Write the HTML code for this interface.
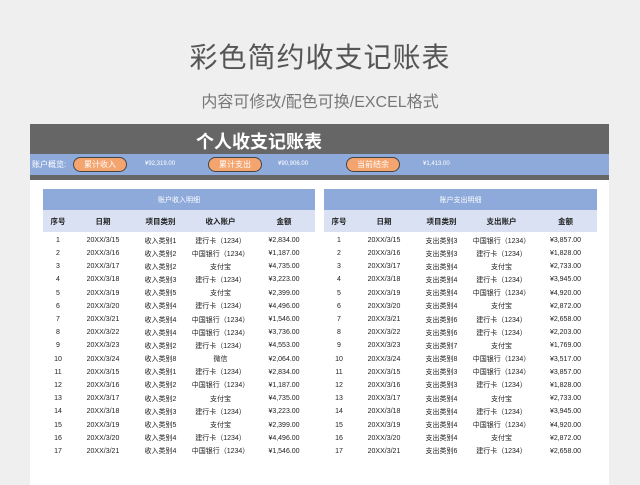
<!DOCTYPE html>
<html><head><meta charset="utf-8"><style>
*{margin:0;padding:0;box-sizing:border-box}
body{width:640px;height:485px;background:#efefef;font-family:"Liberation Sans","Noto Sans CJK SC",sans-serif;position:relative;overflow:hidden}
.t1{position:absolute;top:36px;width:640px;text-align:center;font-size:28px;color:#555;letter-spacing:1px}
.t2{position:absolute;top:88px;width:640px;text-align:center;font-size:16px;color:#777}
.sheet{position:absolute;left:30px;top:124px;width:579px;height:361px;background:#fff}
.hd{position:absolute;left:0;top:0;width:579px;height:30px;background:#666;color:#fff;font-size:18px;font-weight:bold}
.hd span{position:absolute;left:166px;top:4px}
.bar{position:absolute;left:0;top:30px;width:579px;height:21px;background:#8eaadb;color:#fff;font-size:8px}
.strip{position:absolute;left:0;top:51px;width:579px;height:5px;background:#666}
.btn{position:absolute;top:3px;width:54px;height:15px;border-radius:8px;background:#f4a46e;border:1px solid #444;color:#fff;font-size:8px;text-align:center;line-height:13px}
.v{position:absolute;top:7px;font-size:6px;color:#fff}
table{position:absolute;top:65px;border-collapse:collapse;font-size:7px;color:#222;table-layout:fixed}
td{text-align:center;height:13.2px;padding:0}
.th1 td{background:#8eaadb;color:#fff;height:21px;font-size:7px}
.th2 td{background:#d9e1f2;height:22px;font-weight:bold;font-size:7.5px}
.th2+tr td{padding-top:2px;height:15px}
</style></head><body>
<div class="t1">彩色简约收支记账表</div>
<div class="t2">内容可修改/配色可换/EXCEL格式</div>
<div class="sheet">
<div class="hd"><span>个人收支记账表</span></div>
<div class="bar"><span style="position:absolute;left:2px;top:5px">账户概览:</span>
<div class="btn" style="left:43px">累计收入</div><span class="v" style="left:115px">¥92,319.00</span>
<div class="btn" style="left:178px">累计支出</div><span class="v" style="left:248px">¥90,906.00</span>
<div class="btn" style="left:316px">当前结余</div><span class="v" style="left:393px">¥1,413.00</span></div>
<div class="strip"></div>
<table style="left:13px;width:272px">
<colgroup><col style="width:30px"><col style="width:60px"><col style="width:55px"><col style="width:65px"><col style="width:62px"></colgroup>
<tr class="th1"><td colspan="5">账户收入明细</td></tr>
<tr class="th2"><td>序号</td><td>日期</td><td>项目类别</td><td>收入账户</td><td>金额</td></tr>
<tr><td>1</td><td>20XX/3/15</td><td>收入类别1</td><td>建行卡（1234）</td><td>¥2,834.00</td></tr>
<tr><td>2</td><td>20XX/3/16</td><td>收入类别2</td><td>中国银行（1234）</td><td>¥1,187.00</td></tr>
<tr><td>3</td><td>20XX/3/17</td><td>收入类别2</td><td>支付宝</td><td>¥4,735.00</td></tr>
<tr><td>4</td><td>20XX/3/18</td><td>收入类别3</td><td>建行卡（1234）</td><td>¥3,223.00</td></tr>
<tr><td>5</td><td>20XX/3/19</td><td>收入类别5</td><td>支付宝</td><td>¥2,399.00</td></tr>
<tr><td>6</td><td>20XX/3/20</td><td>收入类别4</td><td>建行卡（1234）</td><td>¥4,496.00</td></tr>
<tr><td>7</td><td>20XX/3/21</td><td>收入类别4</td><td>中国银行（1234）</td><td>¥1,546.00</td></tr>
<tr><td>8</td><td>20XX/3/22</td><td>收入类别4</td><td>中国银行（1234）</td><td>¥3,736.00</td></tr>
<tr><td>9</td><td>20XX/3/23</td><td>收入类别2</td><td>建行卡（1234）</td><td>¥4,553.00</td></tr>
<tr><td>10</td><td>20XX/3/24</td><td>收入类别8</td><td>微信</td><td>¥2,064.00</td></tr>
<tr><td>11</td><td>20XX/3/15</td><td>收入类别1</td><td>建行卡（1234）</td><td>¥2,834.00</td></tr>
<tr><td>12</td><td>20XX/3/16</td><td>收入类别2</td><td>中国银行（1234）</td><td>¥1,187.00</td></tr>
<tr><td>13</td><td>20XX/3/17</td><td>收入类别2</td><td>支付宝</td><td>¥4,735.00</td></tr>
<tr><td>14</td><td>20XX/3/18</td><td>收入类别3</td><td>建行卡（1234）</td><td>¥3,223.00</td></tr>
<tr><td>15</td><td>20XX/3/19</td><td>收入类别5</td><td>支付宝</td><td>¥2,399.00</td></tr>
<tr><td>16</td><td>20XX/3/20</td><td>收入类别4</td><td>建行卡（1234）</td><td>¥4,496.00</td></tr>
<tr><td>17</td><td>20XX/3/21</td><td>收入类别4</td><td>中国银行（1234）</td><td>¥1,546.00</td></tr>
</table>
<table style="left:294px;width:273px">
<colgroup><col style="width:30px"><col style="width:60px"><col style="width:55px"><col style="width:65px"><col style="width:63px"></colgroup>
<tr class="th1"><td colspan="5">账户支出明细</td></tr>
<tr class="th2"><td>序号</td><td>日期</td><td>项目类别</td><td>支出账户</td><td>金额</td></tr>
<tr><td>1</td><td>20XX/3/15</td><td>支出类别3</td><td>中国银行（1234）</td><td>¥3,857.00</td></tr>
<tr><td>2</td><td>20XX/3/16</td><td>支出类别3</td><td>建行卡（1234）</td><td>¥1,828.00</td></tr>
<tr><td>3</td><td>20XX/3/17</td><td>支出类别4</td><td>支付宝</td><td>¥2,733.00</td></tr>
<tr><td>4</td><td>20XX/3/18</td><td>支出类别4</td><td>建行卡（1234）</td><td>¥3,945.00</td></tr>
<tr><td>5</td><td>20XX/3/19</td><td>支出类别4</td><td>中国银行（1234）</td><td>¥4,920.00</td></tr>
<tr><td>6</td><td>20XX/3/20</td><td>支出类别4</td><td>支付宝</td><td>¥2,872.00</td></tr>
<tr><td>7</td><td>20XX/3/21</td><td>支出类别6</td><td>建行卡（1234）</td><td>¥2,658.00</td></tr>
<tr><td>8</td><td>20XX/3/22</td><td>支出类别6</td><td>建行卡（1234）</td><td>¥2,203.00</td></tr>
<tr><td>9</td><td>20XX/3/23</td><td>支出类别7</td><td>支付宝</td><td>¥1,769.00</td></tr>
<tr><td>10</td><td>20XX/3/24</td><td>支出类别8</td><td>中国银行（1234）</td><td>¥3,517.00</td></tr>
<tr><td>11</td><td>20XX/3/15</td><td>支出类别3</td><td>中国银行（1234）</td><td>¥3,857.00</td></tr>
<tr><td>12</td><td>20XX/3/16</td><td>支出类别3</td><td>建行卡（1234）</td><td>¥1,828.00</td></tr>
<tr><td>13</td><td>20XX/3/17</td><td>支出类别4</td><td>支付宝</td><td>¥2,733.00</td></tr>
<tr><td>14</td><td>20XX/3/18</td><td>支出类别4</td><td>建行卡（1234）</td><td>¥3,945.00</td></tr>
<tr><td>15</td><td>20XX/3/19</td><td>支出类别4</td><td>中国银行（1234）</td><td>¥4,920.00</td></tr>
<tr><td>16</td><td>20XX/3/20</td><td>支出类别4</td><td>支付宝</td><td>¥2,872.00</td></tr>
<tr><td>17</td><td>20XX/3/21</td><td>支出类别6</td><td>建行卡（1234）</td><td>¥2,658.00</td></tr>
</table>
</div>
</body></html>
